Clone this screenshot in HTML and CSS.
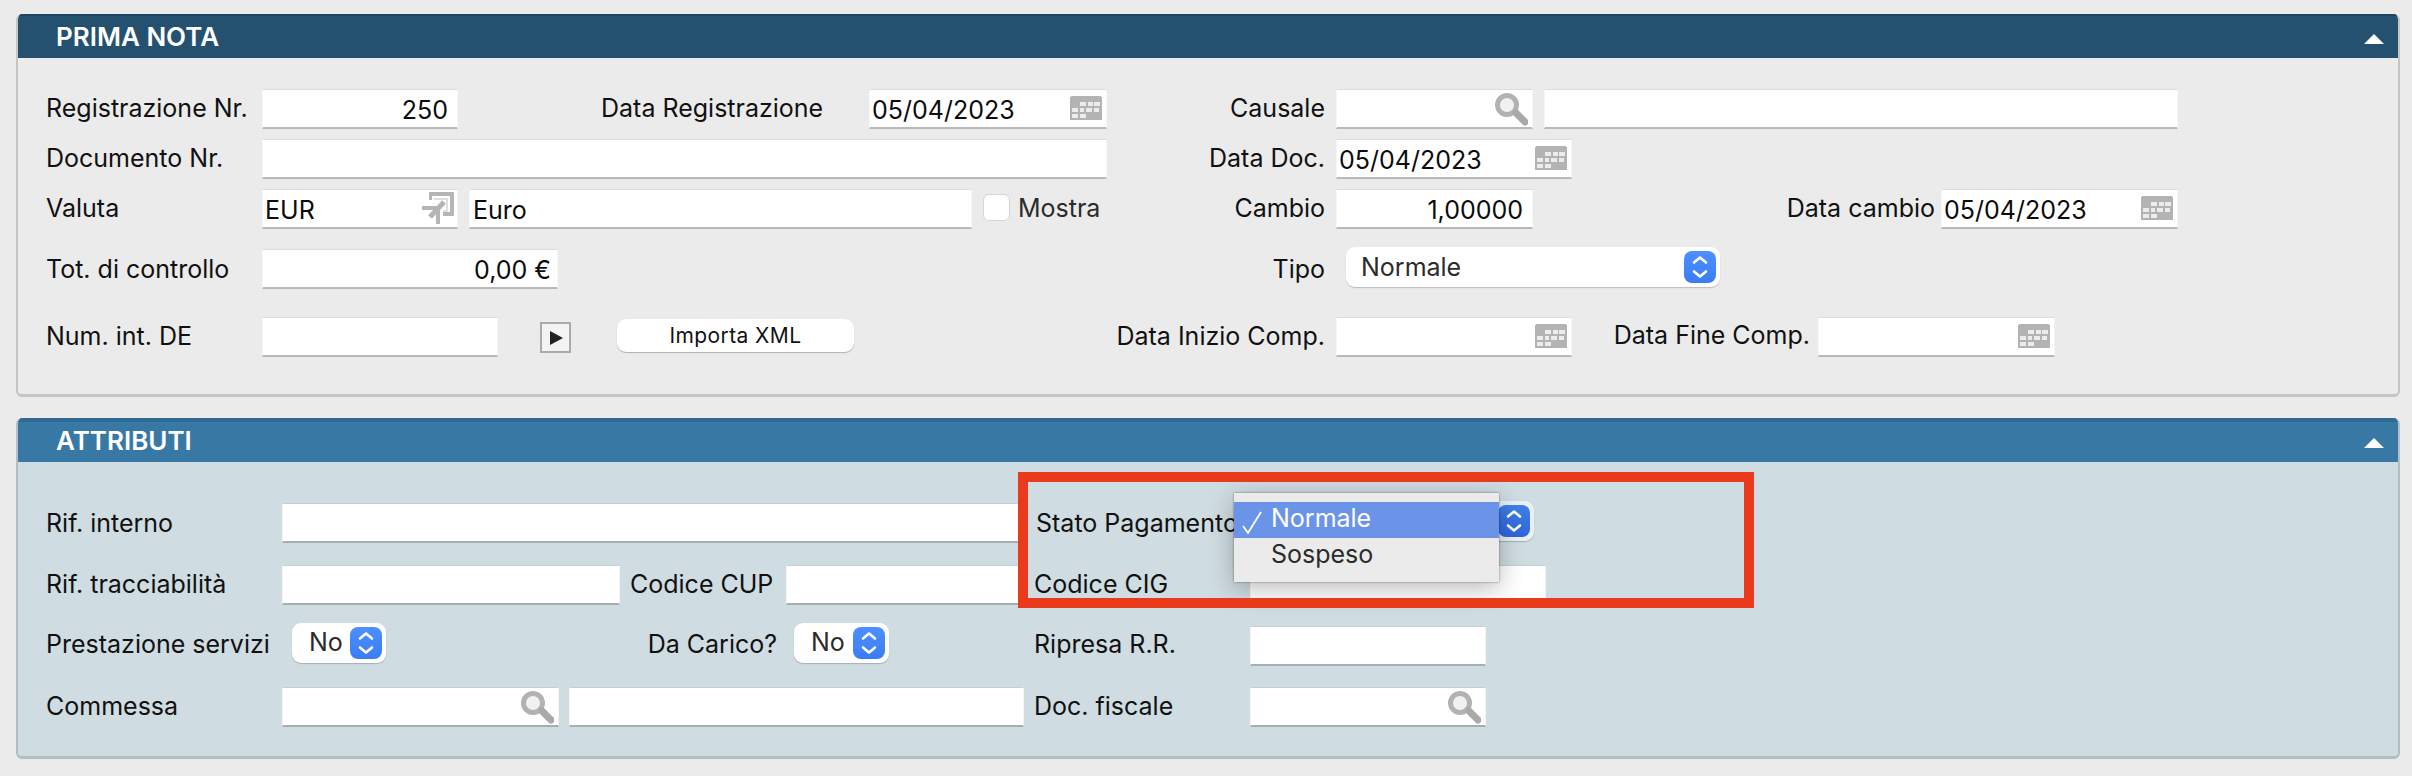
FILE: index.html
```html
<!DOCTYPE html>
<html lang="it">
<head>
<meta charset="utf-8">
<title>Prima Nota</title>
<link rel="stylesheet" href="styles.css">
</head>
<body>
<svg class="defs" width="0" height="0" aria-hidden="true">
  <defs>
    <symbol id="cal" viewBox="0 0 32 24">
      <path fill="#b3b3b3" d="M1 0h30v1h1v23H0V1h1z"/>
      <path fill="#ececec" d="M10 6h6v4h-6zM18 6h5v4h-5zM24 6h6v4h-6zM2 12h6v4H2zM10 12h4v4h-4zM16 12h6v4h-6zM24 12h5v4h-5zM2 18h6v4H2zM10 18h6v4h-6z"/>
    </symbol>
    <symbol id="lens" viewBox="0 0 34 34">
      <circle cx="13" cy="13" r="9.5" fill="#f1f1f1" stroke="#b2b2b2" stroke-width="5"/>
      <path d="M22 21 31 30" stroke="#a9a9a9" stroke-width="7" stroke-linecap="round"/>
    </symbol>
    <symbol id="jump" viewBox="0 0 32 32">
      <path fill="#dedede" d="M12 6h14v14h-5v-2h3V8H12z"/>
      <path fill="#b5b5b5" d="M7 0h25v24H21v-4h7V4H10v4H7z"/>
      <path fill="#b5b5b5" d="M0 14h18v18h-4V18H0z"/>
      <path d="M8 25 22 10" stroke="#b5b5b5" stroke-width="5" fill="none"/>
    </symbol>
    <symbol id="chev" viewBox="0 0 32 32">
      <path d="M10 11.500 16 6.500l6 5M10 20.500l6 5 6-5" fill="none" stroke="#fff" stroke-width="2.600" stroke-linecap="round" stroke-linejoin="round"/>
    </symbol>
  </defs>
</svg>

<main class="page">
  <section class="panel">
    <header class="head dark"><h2>PRIMA NOTA</h2><span class="collapse"></span></header>
    <div class="body body-nota">
      <div class="row">
        <label class="lbl w216">Registrazione Nr.</label>
        <div class="field w196 num">250</div>
        <label class="lbl w268 ml143">Data Registrazione</label>
        <div class="field w238">05/04/2023<svg class="ico cal"><use href="#cal"/></svg></div>
        <label class="lbl w218 right">Causale</label>
        <div class="field w197 ml11"><svg class="ico lens"><use href="#lens"/></svg></div>
        <div class="field w634 ml11"></div>
      </div>
      <div class="row gap10">
        <label class="lbl w216">Documento Nr.</label>
        <div class="field w845"></div>
        <label class="lbl w218 right">Data Doc.</label>
        <div class="field w236 ml11">05/04/2023<svg class="ico cal"><use href="#cal"/></svg></div>
      </div>
      <div class="row gap10">
        <label class="lbl w216">Valuta</label>
        <div class="field w196">EUR<svg class="ico jump"><use href="#jump"/></svg></div>
        <div class="field w503 ml11 pad-desc">Euro</div>
        <span class="check"></span>
        <label class="lbl w89 ml8 soft">Mostra</label>
        <label class="lbl w218 right">Cambio</label>
        <div class="field w197 ml11 num">1,00000</div>
        <label class="lbl w402 right">Data cambio</label>
        <div class="field w237 ml6">05/04/2023<svg class="ico cal"><use href="#cal"/></svg></div>
      </div>
      <div class="row gap20">
        <label class="lbl w216 down">Tot. di controllo</label>
        <div class="field w296 num tight">0,00 €</div>
        <label class="lbl w767 right down">Tipo</label>
        <div class="select w374 ml21 lift">Normale<svg class="step"><use href="#chev"/></svg></div>
      </div>
      <div class="row gap28">
        <label class="lbl w216">Num. int. DE</label>
        <div class="field w236"></div>
        <button class="play" type="button"><span></span></button>
        <button class="action" type="button">Importa XML</button>
        <label class="lbl w471 right">Data Inizio Comp.</label>
        <div class="field w236 ml11"><svg class="ico cal"><use href="#cal"/></svg></div>
        <label class="lbl w238 right up">Data Fine Comp.</label>
        <div class="field w237 ml8"><svg class="ico cal"><use href="#cal"/></svg></div>
      </div>
    </div>
  </section>

  <section class="panel tinted">
    <header class="head blue"><h2>ATTRIBUTI</h2><span class="collapse"></span></header>
    <div class="body body-attr">
      <div class="row">
        <label class="lbl w236 down">Rif. interno</label>
        <div class="field w742"></div>
        <label class="lbl w214 ml12 down">Stato Pagamento</label>
        <div class="select w284 lift anchor">
          <svg class="step"><use href="#chev"/></svg>
          <div class="menu">
            <div class="item active">
              <svg class="tick" viewBox="0 0 22 24"><path d="M2 15 7 22 20 1" fill="none" stroke="#fff" stroke-width="1.800"/></svg>Normale
            </div>
            <div class="item">Sospeso</div>
          </div>
        </div>
      </div>
      <div class="row gap22">
        <label class="lbl w236">Rif. tracciabilità</label>
        <div class="field w338"></div>
        <label class="lbl w156 ml10">Codice CUP</label>
        <div class="field w238"></div>
        <label class="lbl w216 ml10">Codice CIG</label>
        <div class="field w296"></div>
      </div>
      <div class="row gap18">
        <label class="lbl w236 low">Prestazione servizi</label>
        <div class="select w94 ml10 pad-no">No<svg class="step"><use href="#chev"/></svg></div>
        <label class="lbl w391 right low">Da Carico?</label>
        <div class="select w95 ml17 pad-no">No<svg class="step"><use href="#chev"/></svg></div>
        <label class="lbl w216 ml145 low">Ripresa R.R.</label>
        <div class="field w236 drop"></div>
      </div>
      <div class="row gap24">
        <label class="lbl w236">Commessa</label>
        <div class="field w277"><svg class="ico lens"><use href="#lens"/></svg></div>
        <div class="field w455 ml10"></div>
        <label class="lbl w216 ml10">Doc. fiscale</label>
        <div class="field w236"><svg class="ico lens"><use href="#lens"/></svg></div>
      </div>
    </div>
  </section>

  <div class="callout"></div>
</main>
</body>
</html>
```

FILE: styles.css
```css
* { box-sizing: border-box; }
html, body { margin: 0; padding: 0; }
body {
  width: 2412px;
  height: 776px;
  overflow: hidden;
  background: #ebebeb;
  font-family: Inter, "Liberation Sans", sans-serif;
  font-size: 25px;
  color: #111;
}
.defs { position: absolute; }
.page { position: relative; padding: 14px 12px 0 16px; }

/* Panels */
.panel {
  background: #ebebeb;
  border: 2px solid #c6c6c6;
  border-top: 0;
  border-bottom-width: 3px;
  border-radius: 6px;
  overflow: hidden;
}
.tinted { background: #cfdce2; border-color: #b4bec3; margin-top: 21px; }
.head {
  height: 44px;
  margin: 0 -2px;
  padding: 0 16px 0 40px;
  display: flex;
  align-items: center;
  justify-content: space-between;
  color: #fff;
}
.head h2 { margin: 0; font-size: 26px; font-weight: 600; }
.dark { background: #24516f; border-top: 2px solid #1f4661; padding-bottom: 2px; }
.blue { background: #3779a4; border-top: 4px solid #2f6a93; padding-bottom: 4px; }
.collapse {
  width: 0; height: 0;
  margin-top: 6px;
  border-left: 10px solid transparent;
  border-right: 10px solid transparent;
  border-bottom: 10px solid #fff;
}
.body { padding-left: 28px; }
.body-nota { padding-top: 31px; padding-bottom: 37px; }
.body-attr { padding-top: 41px; padding-bottom: 29px; }

/* Rows */
.row { display: flex; align-items: flex-start; height: 40px; }
.gap10 { margin-top: 10px; }
.gap18 { margin-top: 18px; }
.gap20 { margin-top: 20px; }
.gap22 { margin-top: 22px; }
.gap24 { margin-top: 24px; }
.gap28 { margin-top: 28px; }

/* Labels */
.lbl { flex: none; height: 40px; line-height: 38px; white-space: nowrap; color: #111; }
.right { text-align: right; }
.up { line-height: 36px; }
.down { line-height: 40px; }
.low { line-height: 42px; }
.soft { color: #2b2b2b; }

/* Inputs */
.field {
  flex: none;
  position: relative;
  height: 40px;
  padding: 0 2px;
  line-height: 41px;
  background: #fff;
  border-top: 1px solid #dcdcdc;
  border-left: 1px solid #f6f6f6;
  border-right: 1px solid #f6f6f6;
  border-bottom: 2px solid #b9b9b9;
  color: #0c0c0c;
}
.tinted .field { border-color: #c3cfd5 #f4f7f8 #a3afb5; }
.num { text-align: right; padding-right: 9px; }
.tight { padding-right: 6px; }
.pad-desc { padding-left: 3px; }
.drop { margin-top: 3px; }
.ico { position: absolute; display: block; }
.cal { right: 4px; top: 6px; width: 32px; height: 24px; }
.lens { right: 4px; top: 2px; width: 34px; height: 34px; }
.jump { right: 3px; top: 2px; width: 32px; height: 32px; }

/* Widgets */
.check {
  flex: none;
  width: 27px; height: 27px;
  margin: 5px 0 0 11px;
  background: #fff;
  border: 1px solid #d6d6d6;
  border-radius: 6px;
}
.select {
  flex: none;
  position: relative;
  height: 40px;
  padding-left: 15px;
  line-height: 38px;
  background: #fff;
  border-radius: 9px;
  box-shadow: 0 1px 1px rgba(0,0,0,.2);
  color: #2b2b2b;
}
.pad-no { padding-left: 17px; }
.lift { margin-top: -2px; line-height: 40px; }
.step {
  position: absolute;
  right: 4px; top: 4px;
  width: 32px; height: 32px;
  border-radius: 8px;
  background: linear-gradient(#4d90ff, #3b7cf6);
}
.anchor { background: #eaf0f3; }
.anchor .step { background: linear-gradient(#3f7fe9, #2f65dc); }

.play {
  flex: none;
  width: 31px; height: 31px;
  margin: 5px 0 0 42px;
  padding: 0;
  display: flex;
  align-items: center;
  justify-content: center;
  background: #f3f3f3;
  border: 2px solid #aaa;
}
.play span {
  width: 0; height: 0;
  margin-left: 2px;
  border-left: 13px solid #222;
  border-top: 7px solid transparent;
  border-bottom: 7px solid transparent;
}
.action {
  flex: none;
  width: 237px; height: 33px;
  margin: 2px 0 0 46px;
  padding: 0;
  background: #fff;
  border: 0;
  border-radius: 9px;
  box-shadow: 0 1px 1px rgba(0,0,0,.25);
  font-family: inherit;
  font-size: 21px;
  letter-spacing: 0.4px;
  color: #111;
}

/* Popup menu */
.menu {
  position: absolute;
  left: -16px; top: -8px;
  width: 265px; height: 89px;
  padding-top: 9px;
  background: #ebebeb;
  box-shadow: 0 0 2px rgba(0,0,0,.45), 0 6px 24px rgba(0,0,0,.28);
  z-index: 2;
}
.item {
  position: relative;
  height: 36px;
  padding-left: 37px;
  line-height: 33px;
  color: #2b2b2b;
}
.active { background: #6b94e8; color: #fff; }
.tick { position: absolute; left: 7px; top: 9px; width: 22px; height: 24px; }

/* Annotation */
.callout {
  position: absolute;
  left: 1018px; top: 472px;
  width: 736px; height: 136px;
  border: 10px solid #e93a1c;
  z-index: 3;
}

/* Widths */
.w89 { width: 89px; } .w94 { width: 94px; } .w95 { width: 95px; }
.w156 { width: 156px; } .w196 { width: 196px; } .w197 { width: 197px; }
.w214 { width: 214px; } .w216 { width: 216px; } .w218 { width: 218px; }
.w236 { width: 236px; } .w237 { width: 237px; } .w238 { width: 238px; }
.w268 { width: 268px; } .w277 { width: 277px; } .w284 { width: 284px; }
.w296 { width: 296px; } .w338 { width: 338px; } .w374 { width: 374px; }
.w391 { width: 391px; } .w402 { width: 402px; } .w455 { width: 455px; }
.w471 { width: 471px; } .w503 { width: 503px; } .w634 { width: 634px; }
.w742 { width: 742px; } .w767 { width: 767px; } .w845 { width: 845px; }

/* Left offsets */
.ml6 { margin-left: 6px; } .ml8 { margin-left: 8px; } .ml10 { margin-left: 10px; }
.ml11 { margin-left: 11px; } .ml12 { margin-left: 12px; } .ml17 { margin-left: 17px; }
.ml21 { margin-left: 21px; } .ml143 { margin-left: 143px; } .ml145 { margin-left: 145px; }
```
